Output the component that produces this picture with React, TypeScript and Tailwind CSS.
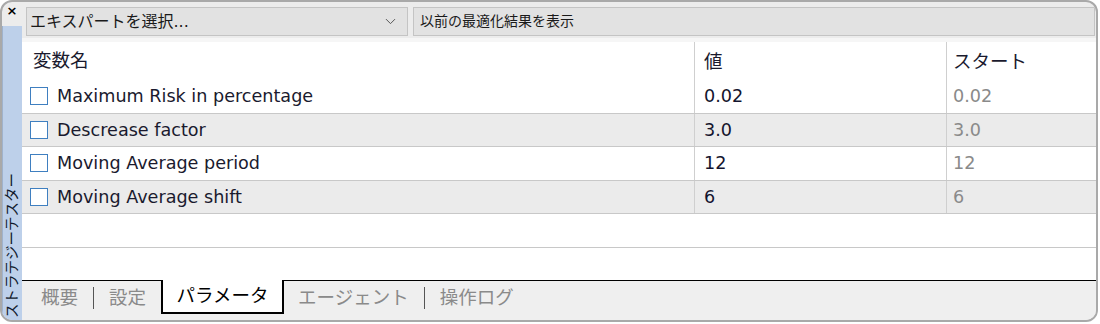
import { ChevronDown } from "lucide-react";

const rows = [
  { name: "Maximum Risk in percentage", value: "0.02", start: "0.02" },
  { name: "Descrease factor", value: "3.0", start: "3.0" },
  { name: "Moving Average period", value: "12", start: "12" },
  { name: "Moving Average shift", value: "6", start: "6" },
];

const font = "font-['DejaVu_Sans','Noto_Sans_CJK_JP',sans-serif]";

export default function App() {
  return (
    <div className={`h-[324px] w-[1100px] bg-white ${font}`}>
      <div className="flex h-[322px] w-[1098px] overflow-hidden rounded-[12px] border-2 border-[#a9a9a9] bg-[#ececec]">
        {/* side rail */}
        <aside className="flex w-[20px] shrink-0 flex-col">
          <div className="flex h-[24px] items-start justify-center pt-[2px] text-[13px] font-bold leading-none text-black">
            ×
          </div>
          <div className="flex flex-1 items-end justify-center border-l border-[#9fb2cc] bg-[#bdd0ea] pb-[2px]">
            <span className="rotate-180 text-[14.5px] leading-none text-[#101a2c] [text-orientation:sideways] [writing-mode:vertical-rl]">
              ストラテジーテスター
            </span>
          </div>
        </aside>

        <main className="flex min-w-0 flex-1 flex-col">
          {/* toolbar */}
          <div className="flex h-[36px] items-center gap-[5px] pl-[4px] pr-[1px] pt-[3px]">
            <div className="flex h-[29px] w-[382px] items-center justify-between border border-[#c4c4c4] bg-[#e2e2e2] pl-[3px] pr-[8px] text-[16px] text-[#1a1a1a]">
              <span>エキスパートを選択...</span>
              <ChevronDown className="h-[17px] w-[17px] text-[#555]" strokeWidth={1.4} />
            </div>
            <div className="flex h-[29px] flex-1 items-center border border-[#c4c4c4] bg-[#e2e2e2] pl-[6px] text-[14px] text-[#1a1a1a]">
              以前の最適化結果を表示
            </div>
          </div>
          <div className="h-[4px] bg-[#f6f6f6]" />

          {/* grid */}
          <div className="flex flex-1 flex-col bg-white text-[17.6px]">
            <div className="grid h-[38px] grid-cols-[672px_252px_1fr] items-center text-[18.5px] text-[#1a1a2e]">
              <div className="pl-[11px]">変数名</div>
              <div className="h-full border-l border-[#cfcfcf] pl-[9px] pt-[6px]">値</div>
              <div className="h-full border-l border-[#cfcfcf] pl-[6px] pt-[6px]">スタート</div>
            </div>
            {rows.map((r, i) => (
              <div
                key={r.name}
                className={`grid h-[33.5px] grid-cols-[672px_252px_1fr] items-stretch border-b border-[#c8c8c8] ${
                  i % 2 === 1 ? "bg-[#ebebeb]" : "bg-white"
                }`}
              >
                <div className="flex items-center gap-[9px] pl-[8px] text-[#1a1a2e]">
                  <span className="h-[18px] w-[18px] shrink-0 border-[1.5px] border-[#3f7fc0] bg-white" />
                  {r.name}
                </div>
                <div className="flex items-center border-l border-[#cfcfcf] pl-[9px] text-[#14142e]">{r.value}</div>
                <div className="flex items-center border-l border-[#cfcfcf] pl-[6px] text-[#8a8a8a]">{r.start}</div>
              </div>
            ))}
            <div className="h-[34px] border-b border-[#c8c8c8]" />
            <div className="flex-1" />
          </div>

          {/* tabs */}
          <div className="flex h-[40px] shrink-0 items-start border-t border-black bg-[#efefef] text-[18.5px] text-[#8a8a8a]">
            <div className="flex h-[33px] items-center pl-[19px]">
              <span>概要</span>
              <span className="mx-[15px] h-[22px] w-px bg-[#555]" />
              <span className="pr-[15px]">設定</span>
            </div>
            <div className="-mt-px flex h-[34px] w-[123px] items-center justify-center border-x-2 border-b-2 border-black bg-white text-black">
              パラメータ
            </div>
            <div className="flex h-[33px] items-center pl-[14px]">
              <span>エージェント</span>
              <span className="mx-[15px] h-[22px] w-px bg-[#555]" />
              <span>操作ログ</span>
            </div>
          </div>
        </main>
      </div>
    </div>
  );
}
